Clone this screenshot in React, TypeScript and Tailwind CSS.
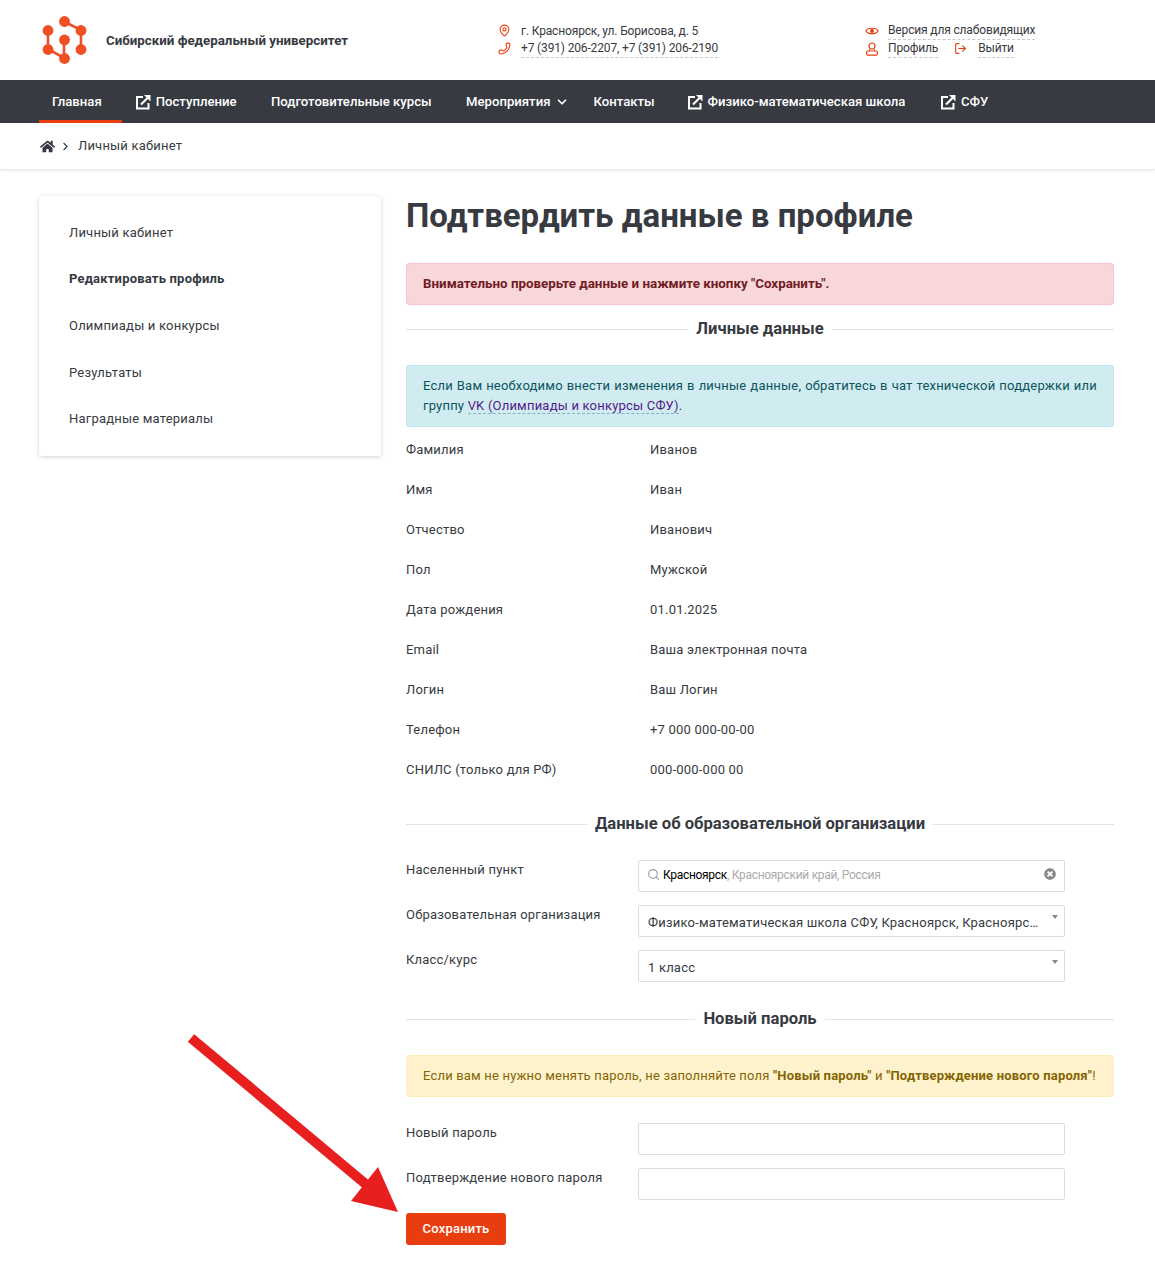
import { ChevronDown, ChevronRight, LogOut, MapPin, Phone, Search } from 'lucide-react'
import { FaHome, FaTimesCircle } from 'react-icons/fa'

const person = [
  ['Фамилия', 'Иванов'],
  ['Имя', 'Иван'],
  ['Отчество', 'Иванович'],
  ['Пол', 'Мужской'],
  ['Дата рождения', '01.01.2025'],
  ['Email', 'Ваша электронная почта'],
  ['Логин', 'Ваш Логин'],
  ['Телефон', '+7 000 000-00-00'],
  ['СНИЛС (только для РФ)', '000-000-000 00'],
]

const menu = ['Личный кабинет', 'Редактировать профиль', 'Олимпиады и конкурсы', 'Результаты', 'Наградные материалы']

function Logo() {
  return (
    <svg width="46" height="50" viewBox="0 0 46 50" fill="none" className="mt-[1px] shrink-0">
      <path d="M22 5.500 39 14V33M6 14V33L22 42V24" stroke="#f04e23" strokeWidth="2.600" />
      <circle cx="22.500" cy="5.500" r="5.400" fill="#f04e23" />
      <circle cx="39" cy="14.500" r="5.400" fill="#f04e23" />
      <circle cx="6" cy="14.500" r="5.400" fill="#f04e23" />
      <circle cx="6" cy="33.500" r="5.400" fill="#f04e23" />
      <circle cx="39" cy="33.500" r="5.400" fill="#f04e23" />
      <circle cx="22.500" cy="24" r="5.400" fill="#f04e23" />
      <circle cx="22.500" cy="42.500" r="5.400" fill="#f04e23" />
    </svg>
  )
}

function ExtIcon() {
  return (
    <svg width="16" height="16" viewBox="0 0 16 16" fill="none" className="mr-[5px] shrink-0">
      <path d="M8 3H2V14.500H13.500V9" stroke="white" strokeWidth="2" />
      <path d="M6 10.500 12.500 4" stroke="white" strokeWidth="2.200" />
      <path d="M9 1H15.500V7.500Z" fill="white" />
    </svg>
  )
}

function EyeIcon() {
  return (
    <svg width="14" height="12" viewBox="0 0 14 12" fill="none" className="mr-[9px] shrink-0">
      <path d="M.8 6C3 2.300 11 2.300 13.200 6 11 9.700 3 9.700.8 6Z" stroke="#e83e0f" strokeWidth="1.200" />
      <circle cx="7" cy="6" r="2" fill="#e83e0f" />
    </svg>
  )
}

function UserIcon() {
  return (
    <svg width="14" height="14" viewBox="0 0 14 14" fill="none" className="mr-[9px] shrink-0">
      <circle cx="7" cy="4" r="3" stroke="#e83e0f" strokeWidth="1.200" />
      <path d="M4.500 7V8.500M9.500 7V8.500" stroke="#e83e0f" strokeWidth="1.200" />
      <rect x="1.600" y="9" width="10.800" height="4.200" rx="1.500" stroke="#e83e0f" strokeWidth="1.200" />
    </svg>
  )
}

function NavItem({ label, ext, active, chevron, className = 'pr-[34.500px]' }: { label: string; ext?: boolean; active?: boolean; chevron?: boolean; className?: string }) {
  return (
    <div className={`flex h-full items-center text-[13.150px] font-medium text-white ${className} ${active ? 'mr-[13px] border-b-[3px] border-[#e83e0f] pl-[13px] pt-[3px]' : ''}`}>
      {ext && <ExtIcon />}
      {label}
      {chevron && <ChevronDown size={14} strokeWidth={3} className="ml-[5px]" />}
    </div>
  )
}

function SectionTitle({ title }: { title: string }) {
  return (
    <div className="flex items-center gap-[8px]">
      <div className="h-px flex-1 bg-[#e3e3e3]" />
      <div className="text-[16.600px] font-bold leading-[24px] text-[#373a41]">{title}</div>
      <div className="h-px flex-1 bg-[#e3e3e3]" />
    </div>
  )
}

function FormRow({ label, children }: { label: string; children?: React.ReactNode }) {
  return (
    <div className="flex h-[32px] items-start">
      <div className="w-[232px] pt-[1px] text-[13px] leading-[18px] tracking-[0.2px]">{label}</div>
      <div className="relative flex h-[32px] w-[427px] items-center rounded-[2px] border border-[#dcdcdc] bg-white px-[9px] text-[13px] tracking-[0.2px]">
        {children}
      </div>
    </div>
  )
}

function Caret() {
  return <div className="absolute right-[6px] top-[9px] h-0 w-0 border-x-[3px] border-t-[4px] border-x-transparent border-t-[#888]" />
}

export default function App() {
  return (
    <div className="relative min-h-[1267px] bg-white font-['Roboto',sans-serif] text-[#373a41]">
      <header className="flex h-[80px] items-center pl-[42px]">
        <div className="flex w-[457px] items-center gap-[18px] pt-[1px]">
          <Logo />
          <span className="text-[13.330px] font-bold">Сибирский федеральный университет</span>
        </div>
        <div className="mt-[-1px] w-[366px] text-[12px] leading-[18px] tracking-[-0.15px]">
          <div className="flex items-center">
            <MapPin size={13} color="#e83e0f" className="ml-[-1px] mr-[10px]" />
            г. Красноярск, ул. Борисова, д. 5
          </div>
          <div className="flex items-center">
            <Phone size={13} color="#e83e0f" className="ml-[-1px] mr-[10px] -scale-x-100" />
            <span className="border-b border-dashed border-[#c9c9c9] leading-[17px]">+7 (391) 206-2207, +7 (391) 206-2190</span>
          </div>
        </div>
        <div className="mt-[-1px] text-[12px] leading-[18px] tracking-[-0.15px]">
          <div className="flex items-center">
            <EyeIcon />
            <span className="border-b border-dashed border-[#c9c9c9] leading-[17px]">Версия для слабовидящих</span>
          </div>
          <div className="flex items-center">
            <UserIcon />
            <span className="border-b border-dashed border-[#c9c9c9] leading-[17px]">Профиль</span>
            <LogOut size={13} color="#e83e0f" className="ml-[16px] mr-[11px]" />
            <span className="border-b border-dashed border-[#c9c9c9] leading-[17px]">Выйти</span>
          </div>
        </div>
      </header>

      <nav className="flex h-[43px] items-center bg-[#373a41] pl-[39px]">
        <NavItem label="Главная" active className="pr-[20px]" />
        <NavItem label="Поступление" ext />
        <NavItem label="Подготовительные курсы" />
        <NavItem label="Мероприятия" chevron className="pr-[24px]" />
        <NavItem label="Контакты" className="pr-[32px]" />
        <NavItem label="Физико-математическая школа" ext />
        <NavItem label="СФУ" ext />
      </nav>

      <div className="flex h-[47px] items-center border-b border-[#e8e8e8] pl-[40px] text-[13px] tracking-[0.2px] shadow-[0_1px_3px_rgba(0,0,0,0.08)]">
        <FaHome size={15} />
        <ChevronRight size={13} strokeWidth={2} className="ml-[4px] mr-[6px]" />
        Личный кабинет
      </div>

      <main className="flex items-start pl-[39px] pr-[41px] pt-[26px]">
        <aside className="w-[342px] shrink-0 rounded-[2px] px-[30px] pb-[14px] pt-[13px] text-[13px] tracking-[0.2px] shadow-[0_1px_4px_rgba(0,0,0,0.18)]">
          {menu.map((item, i) => (
            <div key={item} className={`flex h-[46.700px] items-center ${i === 1 ? 'font-bold' : ''}`}>
              {item}
            </div>
          ))}
        </aside>

        <section className="ml-[25px] w-[708px] shrink-0">
          <h1 className="mb-[27px] text-[33px] font-bold leading-[40px]">Подтвердить данные в профиле</h1>

          <div className="flex h-[42px] items-center rounded-[3px] border border-[#f5c6cb] bg-[#f8d7da] px-[16px] text-[13.360px] font-bold text-[#721c24]">
            Внимательно проверьте данные и нажмите кнопку "Сохранить".
          </div>

          <div className="mt-[12px] mb-[24px]">
            <SectionTitle title="Личные данные" />
          </div>

          <div className="rounded-[3px] border border-[#bee5eb] bg-[#d1ecf1] px-[16px] py-[10px] text-justify text-[13px] leading-[20px] tracking-[0.2px] text-[#0c5460]">
            Если Вам необходимо внести изменения в личные данные, обратитесь в чат технической поддержки или группу{' '}
            <span className="border-b border-dashed border-[#7fb4c7] text-[#551a8b]">VK (Олимпиады и конкурсы СФУ)</span>.
          </div>

          <div className="mt-[3px]">
            {person.map(([label, value]) => (
              <div key={label} className="flex h-[40px] items-center text-[13px] tracking-[0.2px]">
                <div className="w-[244px]">{label}</div>
                <div>{value}</div>
              </div>
            ))}
          </div>

          <div className="mt-[22px] mb-[24px]">
            <SectionTitle title="Данные об образовательной организации" />
          </div>

          <div className="flex flex-col gap-[13px]">
            <FormRow label="Населенный пункт">
              <Search size={13} color="#999" className="ml-[-1px] mr-[3px] mt-[-3px] shrink-0" />
              <span className="mt-[-3px] text-[12px] tracking-[-0.3px] text-[#aaa]">
                <span className="text-black">Красноярск</span>, Красноярский край, Россия
              </span>
              <FaTimesCircle size={12} color="#888" className="absolute right-[8px] top-[7px]" />
            </FormRow>
            <FormRow label="Образовательная организация">
              <span className="w-[392px] truncate pt-[3px]">Физико-математическая школа СФУ, Красноярск, Красноярский край, Россия</span>
              <Caret />
            </FormRow>
            <FormRow label="Класс/курс">
              <span className="pt-[3px]">1 класс</span>
              <Caret />
            </FormRow>
          </div>

          <div className="mt-[25px] mb-[24px]">
            <SectionTitle title="Новый пароль" />
          </div>

          <div className="flex h-[42px] items-center whitespace-nowrap rounded-[3px] border border-[#ffeeba] bg-[#fff3cd] px-[16px] text-[13px] tracking-[0.18px] text-[#856404]">
            <span>
              Если вам не нужно менять пароль, не заполняйте поля <b>"Новый пароль"</b> и <b>"Подтверждение нового пароля"</b>!
            </span>
          </div>

          <div className="mt-[26px] flex flex-col gap-[13px]">
            <FormRow label="Новый пароль" />
            <FormRow label="Подтверждение нового пароля" />
          </div>

          <button className="mt-[13px] h-[32px] w-[100px] rounded-[3px] bg-[#e83e0f] text-[13px] font-medium tracking-[0.2px] text-white">Сохранить</button>
        </section>
      </main>

      <svg width="240" height="200" viewBox="0 0 240 200" className="pointer-events-none absolute left-[180px] top-[1030px]">
        <path d="M11 8 188 156" stroke="#e81f1f" strokeWidth="10" fill="none" />
        <path d="M171 171 218 182 198 137Z" fill="#e81f1f" />
      </svg>
    </div>
  )
}
